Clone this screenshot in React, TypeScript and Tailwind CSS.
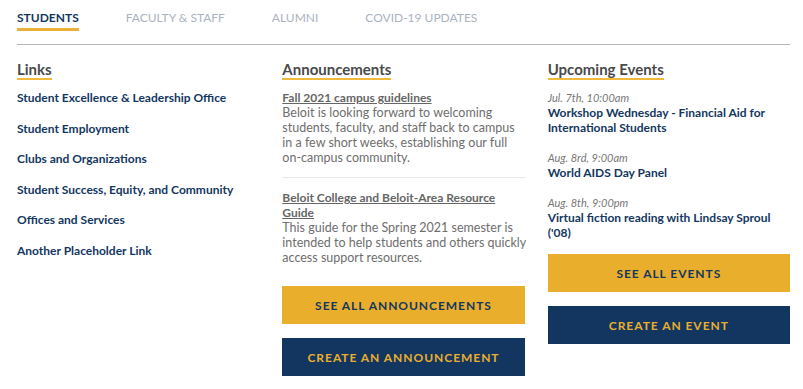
import React from 'react';

const tabs = ['Students', 'Faculty & Staff', 'Alumni', 'COVID-19 Updates'];

const links = [
  'Student Excellence & Leadership Office',
  'Student Employment',
  'Clubs and Organizations',
  'Student Success, Equity, and Community',
  'Offices and Services',
  'Another Placeholder Link',
];

// body copy is broken where the reference breaks it
const announcements = [
  {
    title: 'Fall 2021 campus guidelines',
    body: [
      'Beloit is looking forward to welcoming',
      'students, faculty, and staff back to campus',
      'in a few short weeks, establishing our full',
      'on-campus community.',
    ],
  },
  {
    title: 'Beloit College and Beloit-Area Resource Guide',
    body: [
      'This guide for the Spring 2021 semester is',
      'intended to help students and others quickly',
      'access support resources.',
    ],
  },
];

const events = [
  { date: 'Jul. 7th, 10:00am', title: 'Workshop Wednesday - Financial Aid for International Students' },
  { date: 'Aug. 8rd, 9:00am', title: 'World AIDS Day Panel' },
  { date: 'Aug. 8th, 9:00pm', title: "Virtual fiction reading with Lindsay Sproul ('08)" },
];

const Heading = ({ children }: { children: React.ReactNode }) => (
  <div className="leading-none">
    <h3 className="inline-block border-b-2 border-[#f0b93a] text-[15px] font-bold leading-[17px] text-[#4a4a4a]">
      {children}
    </h3>
  </div>
);

const Button = ({ label, variant }: { label: string; variant: 'gold' | 'navy' }) => (
  <a
    href="#"
    className={
      variant === 'gold'
        ? 'flex h-[38px] items-center justify-center bg-[#eaae2d] text-[12px] font-bold uppercase tracking-[0.08em] text-[#13375f]'
        : 'flex h-[38px] items-center justify-center bg-[#12365f] text-[12px] font-bold uppercase tracking-[0.08em] text-[#eaae2d]'
    }
  >
    {label}
  </a>
);

export default function App() {
  return (
    <div className="min-h-screen bg-white pl-[17px] pr-[13px] font-['Lato',sans-serif] leading-[15px]">
      <nav className="flex gap-[47px] pt-[10px]">
        {tabs.map((tab, i) => (
          <a
            key={tab}
            href="#"
            className={
              i === 0
                ? 'block border-b-[3px] border-[#eab03a] pb-[3px] text-[12px] font-bold uppercase leading-[15px] text-[#13375f]'
                : 'block pb-[3px] text-[12px] uppercase leading-[15px] text-[#aab3bf]'
            }
          >
            {tab}
          </a>
        ))}
      </nav>
      <div className="mt-[13px] h-px bg-[#b5b5b5]" />

      <div className="mt-[16px] grid grid-cols-3 gap-[23px]">
        <section>
          <Heading>Links</Heading>
          <ul className="mt-[10px] flex flex-col gap-[15.5px]">
            {links.map((link) => (
              <li key={link}>
                <a href="#" className="block text-[12px] font-bold leading-[15px] text-[#13375f]">
                  {link}
                </a>
              </li>
            ))}
          </ul>
        </section>

        <section>
          <Heading>Announcements</Heading>
          <div className="mt-[10px]">
            {announcements.map((a, i) => (
              <div
                key={a.title}
                className={i === 0 ? 'border-b border-[#e6e6e6] pb-[12px]' : 'pt-[12px]'}
              >
                <a href="#" className="block text-[12px] font-bold leading-[15px] text-[#666] underline">
                  {a.title}
                </a>
                <p className="whitespace-nowrap text-[12.5px] leading-[15px] text-[#6e6e6e]">
                  {a.body.map((line, j) => (
                    <React.Fragment key={j}>
                      {line}
                      {j < a.body.length - 1 && <br />}
                    </React.Fragment>
                  ))}
                </p>
              </div>
            ))}
          </div>
          <div className="mt-[21px] flex flex-col gap-[14px]">
            <Button label="See all announcements" variant="gold" />
            <Button label="Create an announcement" variant="navy" />
          </div>
        </section>

        <section>
          <Heading>Upcoming Events</Heading>
          <div className="mt-[10px] flex flex-col gap-[15px]">
            {events.map((e) => (
              <div key={e.title}>
                <p className="text-[11px] italic leading-[15px] text-[#777]">{e.date}</p>
                <a href="#" className="block text-[12px] font-bold leading-[15px] text-[#13375f]">
                  {e.title}
                </a>
              </div>
            ))}
          </div>
          <div className="mt-[14px] flex flex-col gap-[14px]">
            <Button label="See all events" variant="gold" />
            <Button label="Create an event" variant="navy" />
          </div>
        </section>
      </div>
    </div>
  );
}
